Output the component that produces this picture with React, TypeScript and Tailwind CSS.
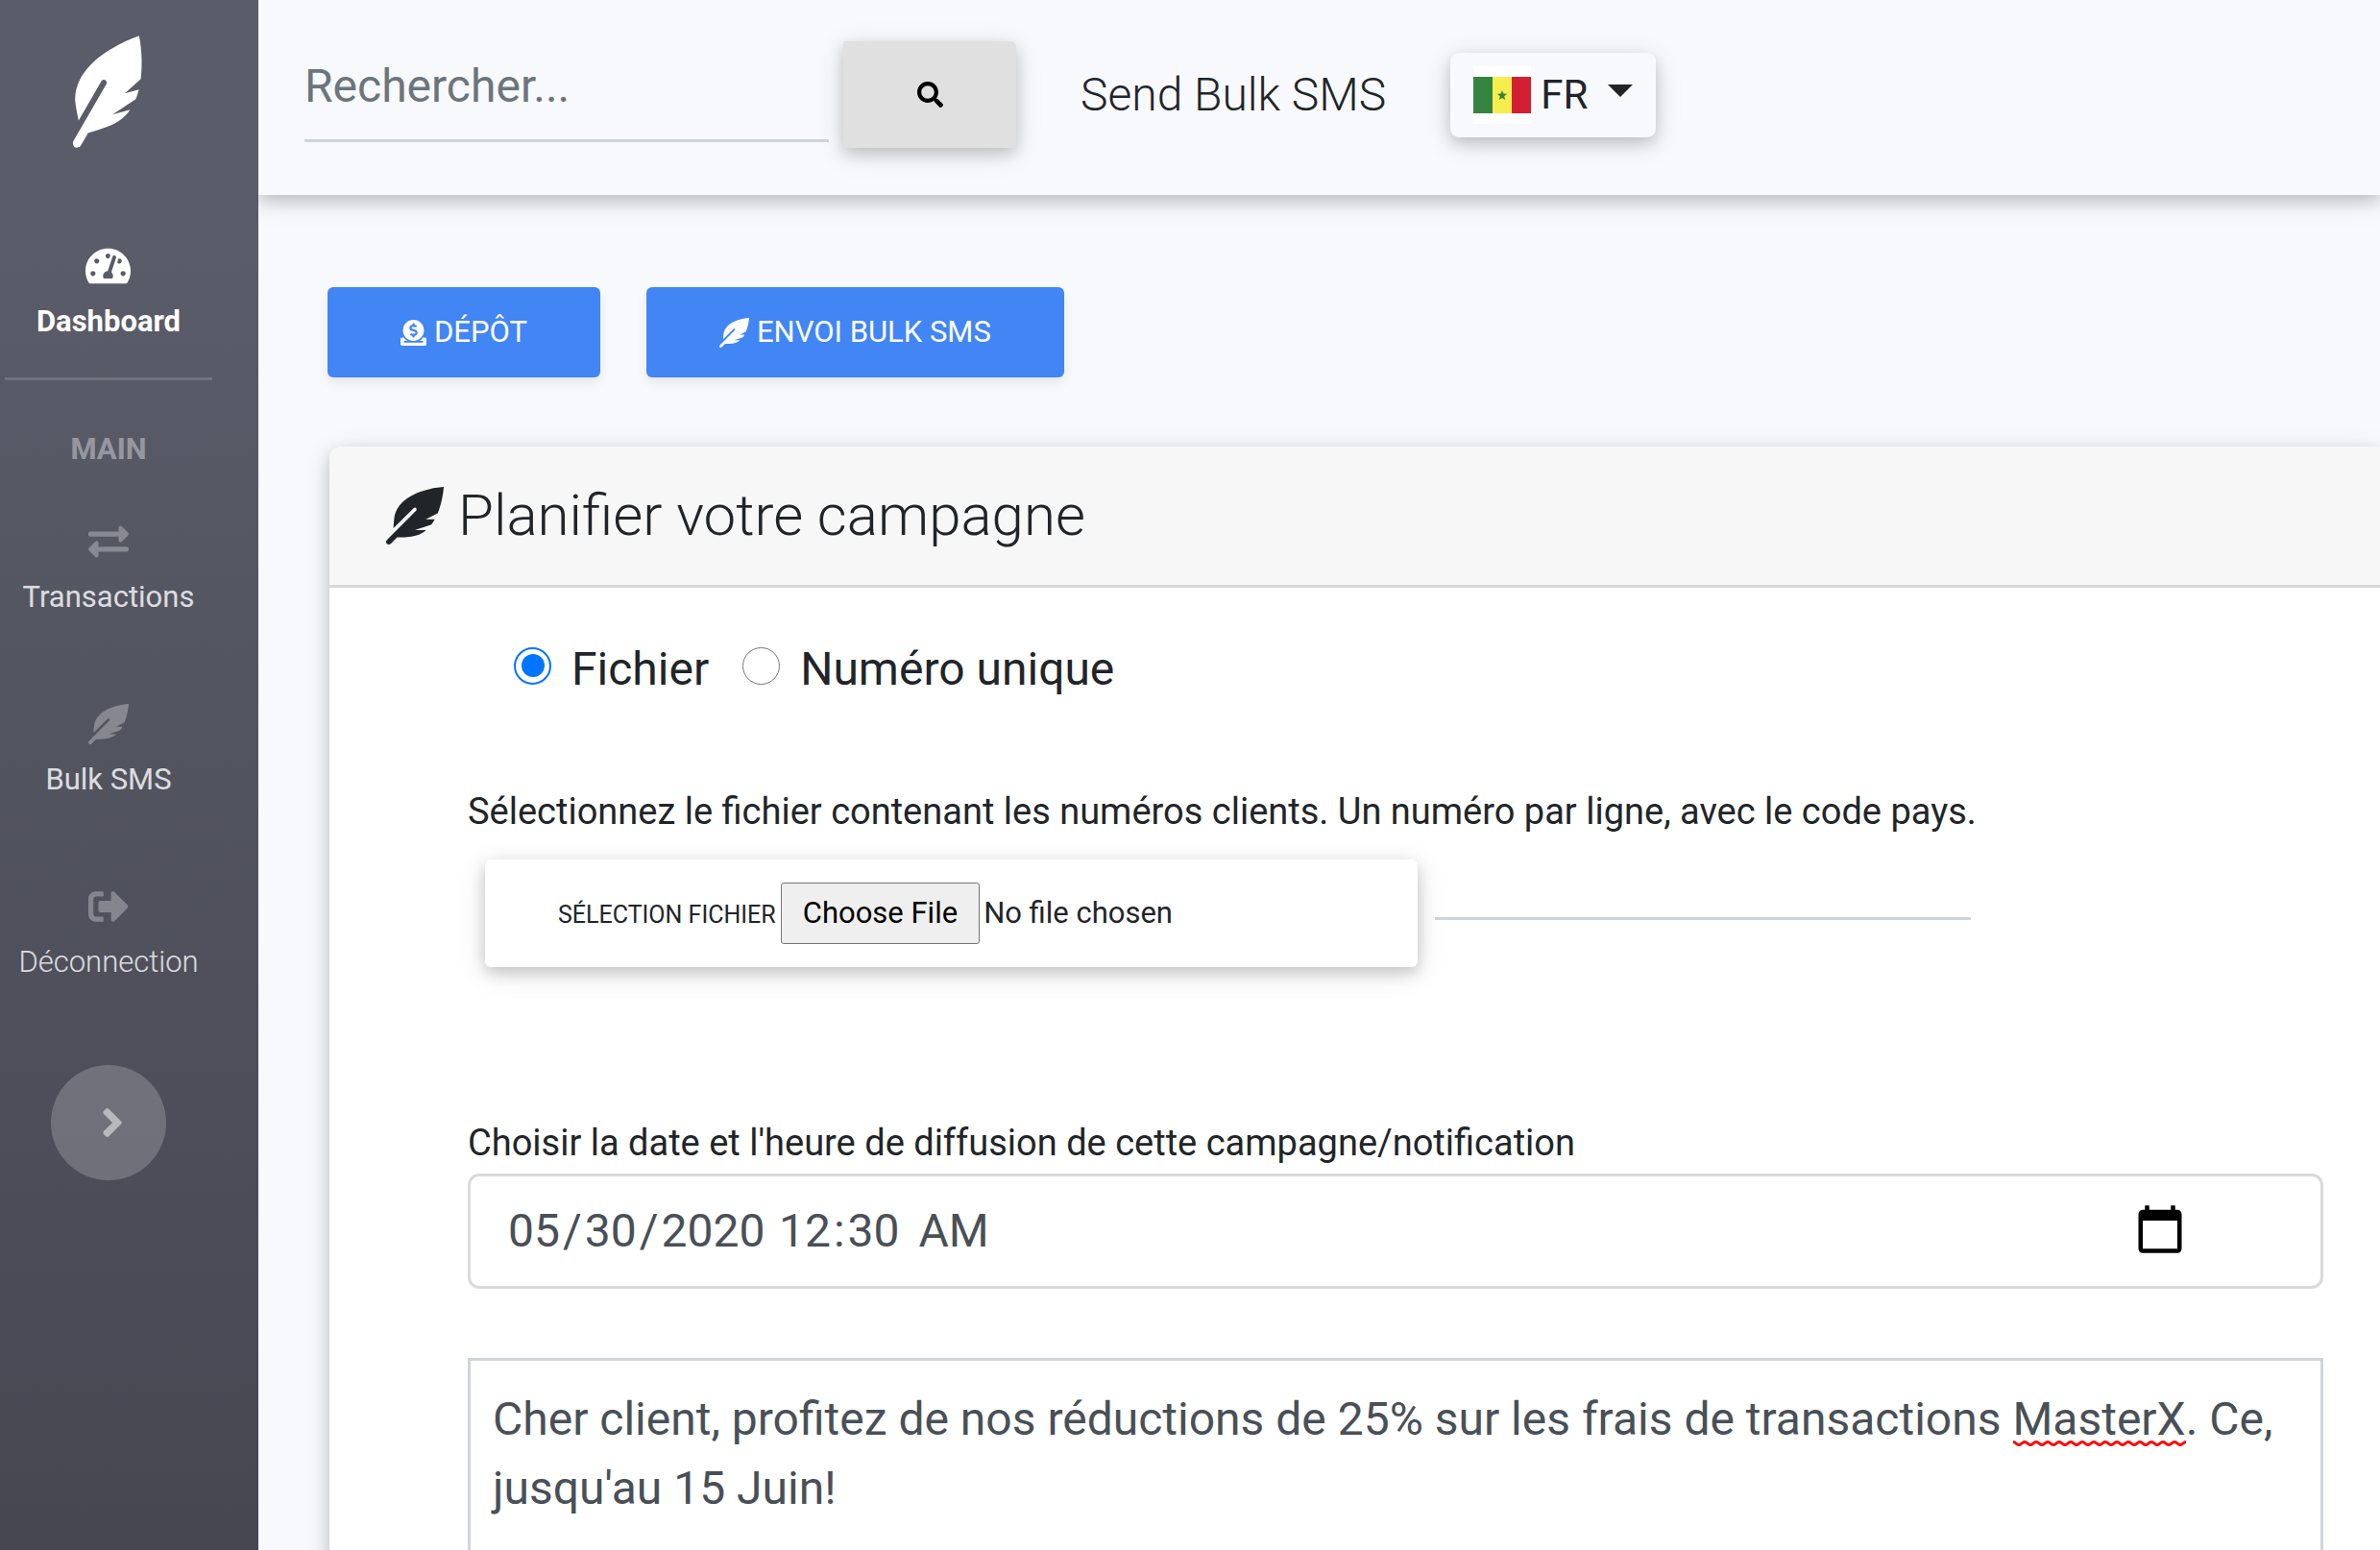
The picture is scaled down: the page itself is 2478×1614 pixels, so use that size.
import type { ReactNode } from "react";
import {
  FaAngleRight,
  FaDonate,
  FaExchangeAlt,
  FaFeatherAlt,
  FaSearch,
  FaSignOutAlt,
  FaTachometerAlt,
} from "react-icons/fa";
import { MdCalendarToday } from "react-icons/md";

const raised = "shadow-[0_6px_15px_rgba(0,0,0,0.16),0_6px_30px_rgba(0,0,0,0.12)]";

type NavItemProps = { icon: ReactNode; label: string; tone: string };

function NavItem({ icon, label, tone }: NavItemProps) {
  return (
    <a href="#" className="flex flex-col items-center gap-[17px]">
      <span className={tone === "active" ? "text-[42px] text-white" : "text-[42px] text-white/30"}>{icon}</span>
      <span
        className={
          tone === "active"
            ? "text-[31px] leading-10 font-bold text-white"
            : tone === "light"
              ? "text-[31px] leading-10 font-light text-white/80"
              : "text-[31px] leading-10 text-white/80"
        }
      >
        {label}
      </span>
    </a>
  );
}

function Sidebar() {
  return (
    <aside className="relative z-10 w-[269px] shrink-0 bg-linear-to-b from-[#5a5c69] from-16% to-[#464751]">
      <nav className="flex w-[226px] flex-col items-center pt-12">
        <a href="#" aria-label="Accueil" className="pr-1 text-[96px] text-white">
          <FaFeatherAlt className="-rotate-15" />
        </a>
        <div className="mt-28">
          <NavItem icon={<FaTachometerAlt className="h-[42px] w-[47px]" />} label="Dashboard" tone="active" />
        </div>
        <hr className="mt-[38px] w-[216px] border-0 border-t-[3px] border-white/15" />
        <h2 className="mt-[52px] text-[31px] leading-10 font-bold text-white/40">MAIN</h2>
        <div className="mt-[55px] flex flex-col items-center gap-[91px]">
          <NavItem icon={<FaExchangeAlt />} label="Transactions" tone="normal" />
          <NavItem icon={<FaFeatherAlt />} label="Bulk SMS" tone="normal" />
          <NavItem icon={<FaSignOutAlt />} label="Déconnection" tone="light" />
        </div>
        <button
          type="button"
          aria-label="Déplier le menu"
          className="mt-[87px] flex size-[120px] items-center justify-center rounded-full bg-white/20 pl-2 text-5xl text-white/50"
        >
          <FaAngleRight />
        </button>
      </nav>
    </aside>
  );
}

function SenegalFlag() {
  return (
    <svg viewBox="0 0 60 60" className="size-[60px]" aria-hidden="true">
      <rect width="60" height="60" fill="#fff" />
      <rect y="11" width="20" height="38" fill="#35843f" />
      <rect x="20" y="11" width="20" height="38" fill="#f8ed4f" />
      <rect x="40" y="11" width="20" height="38" fill="#d21f33" />
      <path d="M30 25l1.4 3.6 3.8.2-3 2.4 1 3.8-3.2-2.1-3.2 2.1 1-3.8-3-2.4 3.8-.2z" fill="#35843f" />
    </svg>
  );
}

function Topbar() {
  return (
    <header className={`flex h-[203px] items-center bg-[#f8f9fc] pb-[6px] pl-12 ${raised}`}>
      <form className="flex items-center gap-[15px]">
        <input
          type="text"
          aria-label="Rechercher"
          placeholder="Rechercher..."
          className="mb-[15px] h-[114px] w-[546px] border-b-[3px] border-[#ced4da] bg-transparent text-5xl outline-none placeholder:text-[#6c757d]"
        />
        <button
          type="button"
          aria-label="Lancer la recherche"
          className={`flex h-[111px] w-[180px] items-center justify-center rounded-r-md bg-[#e0e0e0] text-[27px] text-black ${raised}`}
        >
          <FaSearch />
        </button>
      </form>
      <a href="#" className="ml-[67px] text-5xl font-light whitespace-nowrap">
        Send Bulk SMS
      </a>
      <button
        type="button"
        className={`ml-[67px] flex h-[88px] items-center rounded-[9px] bg-[#f8f9fc] px-6 text-[42px] ${raised}`}
      >
        <SenegalFlag />
        <span className="ml-[10px]">FR</span>
        <svg viewBox="0 0 26 13" className="mb-2 ml-[21px] h-[13px] w-[26px]" aria-hidden="true">
          <path d="M0 0h26L13 13z" fill="currentColor" />
        </svg>
      </button>
    </header>
  );
}

function ActionButton({ icon, label }: { icon: ReactNode; label: string }) {
  return (
    <button
      type="button"
      className="flex h-[94px] items-center gap-2 rounded-md bg-[#4285f4] px-[76px] text-[31px] text-white uppercase shadow-[0_6px_12px_rgba(0,0,0,0.075)]"
    >
      {icon}
      <span>{label}</span>
    </button>
  );
}

function RadioOption({ label, checked }: { label: string; checked?: boolean }) {
  return (
    <label className="flex items-center gap-[21px] text-5xl leading-[72px]">
      <input
        type="radio"
        name="cible"
        defaultChecked={checked}
        className="mb-2 grid size-[39px] appearance-none place-content-center rounded-full border border-[#767676] bg-white before:size-6 before:rounded-full before:bg-transparent checked:border-2 checked:border-[#0075ff] checked:before:bg-[#0075ff]"
      />
      {label}
    </label>
  );
}

function CampaignForm() {
  return (
    <form className="flex flex-col pt-[49px] pr-[59px] pl-36">
      <div className="flex gap-[35px] pl-12">
        <RadioOption label="Fichier" checked />
        <RadioOption label="Numéro unique" />
      </div>

      <p className="mt-[83px] text-[38px] leading-[58px]">
        Sélectionnez le fichier contenant les numéros clients. Un numéro par ligne, avec le code pays.
      </p>
      <div className="mt-[21px] flex gap-[18px] pl-[18px]">
        <div className={`flex h-28 w-[971px] items-center rounded-md bg-white pl-[76px] ${raised}`}>
          <div className="flex items-baseline gap-[5px]">
            <label htmlFor="fichier" className="text-[25px] whitespace-nowrap">
              SÉLECTION FICHIER
            </label>
            <input
              id="fichier"
              type="file"
              className="h-16 w-[560px] text-[31px] file:me-1 file:h-16 file:rounded-[3px] file:border file:border-solid file:border-[#767676] file:bg-[#efefef] file:px-[22px] file:text-black"
            />
          </div>
        </div>
        <input
          type="text"
          aria-label="Nom du fichier"
          readOnly
          className="h-[63px] w-[558px] border-b-[3px] border-[#ced4da] bg-transparent text-5xl outline-none"
        />
      </div>

      <label htmlFor="date-diffusion" className="mt-[154px] text-[38px] leading-[58px]">
        Choisir la date et l'heure de diffusion de cette campagne/notification
      </label>
      <div className="mt-[3px] flex h-[120px] items-center rounded-xl border-[3px] border-[#d9dade] bg-white pr-[140px] pl-9 text-5xl text-[#495057]">
        <input
          id="date-diffusion"
          type="date"
          defaultValue="2020-05-30"
          className="w-[276px] outline-none [&::-webkit-calendar-picker-indicator]:hidden [&::-webkit-datetime-edit-day-field]:px-[3px] [&::-webkit-datetime-edit-month-field]:px-[3px] [&::-webkit-datetime-edit-year-field]:px-[3px]"
        />
        <input
          type="time"
          aria-label="Heure de diffusion"
          defaultValue="00:30"
          className="ml-[6px] w-[240px] outline-none [&::-webkit-calendar-picker-indicator]:hidden [&::-webkit-datetime-edit-ampm-field]:pr-[3px] [&::-webkit-datetime-edit-ampm-field]:pl-[11px] [&::-webkit-datetime-edit-hour-field]:px-[3px] [&::-webkit-datetime-edit-minute-field]:px-[3px]"
        />
        <button type="button" aria-label="Ouvrir le calendrier" className="mb-1 ml-auto text-[54px] text-black">
          <MdCalendarToday />
        </button>
      </div>

      <div className="relative mt-[72px]">
        <textarea
          aria-label="Message"
          spellCheck={false}
          rows={6}
          defaultValue="Cher client, profitez de nos réductions de 25% sur les frais de transactions MasterX. Ce, jusqu'au 15 Juin!"
          className="block w-full resize-none border-[3px] border-[#ced4da] bg-white px-[23px] py-[25px] text-5xl leading-[72px] text-[#495057] outline-none"
        />
        <svg className="absolute top-[85px] right-[143px] h-2 w-[180px]" aria-hidden="true">
          <defs>
            <pattern id="wave" width="12" height="8" patternUnits="userSpaceOnUse">
              <path
                d="M-6 5.5C-3 5.5 -3 2.5 0 2.5S3 5.5 6 5.5S9 2.5 12 2.5S15 5.5 18 5.5"
                fill="none"
                stroke="#f00"
                strokeWidth="3"
              />
            </pattern>
          </defs>
          <rect width="100%" height="8" fill="url(#wave)" />
        </svg>
      </div>
    </form>
  );
}

export default function App() {
  return (
    <div className="flex h-screen overflow-hidden bg-[#f8f9fc] font-['Roboto',sans-serif] text-[#212529]">
      <Sidebar />
      <div className="min-w-0 flex-1">
        <Topbar />
        <main>
          <div className="flex gap-12 pt-24 pl-[72px]">
            <ActionButton icon={<FaDonate className="size-[27px]" />} label="Dépôt" />
            <ActionButton icon={<FaFeatherAlt />} label="Envoi Bulk SMS" />
          </div>
          <div className="mt-[72px] pl-[74px]">
            <section className={`rounded-tl-xl bg-white ${raised}`}>
              <div className="flex items-center gap-[15px] rounded-tl-xl border-b-[3px] border-[#d8d8d8] bg-[#f7f7f7] py-9 pl-[59px]">
                <FaFeatherAlt className="size-[60px]" />
                <h1 className="text-6xl leading-[72px] font-light">Planifier votre campagne</h1>
              </div>
              <CampaignForm />
            </section>
          </div>
        </main>
      </div>
    </div>
  );
}
